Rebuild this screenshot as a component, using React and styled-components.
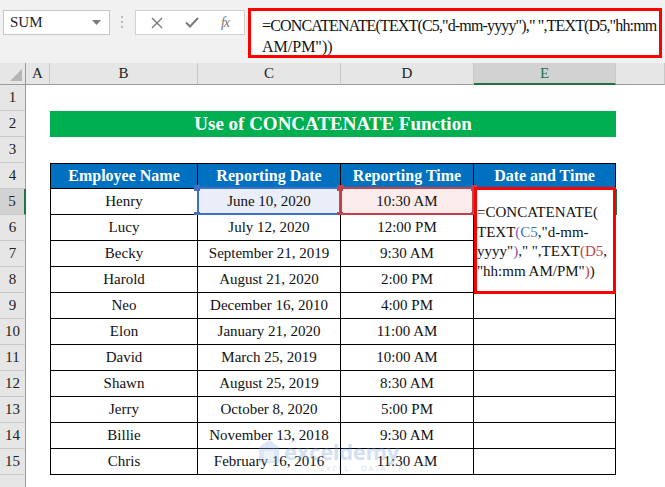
import React from 'react'
import styled, { createGlobalStyle, css } from 'styled-components'

const GlobalStyle = createGlobalStyle`
  html, body {
    margin: 0;
    padding: 0;
    background: #fff;
  }
  body {
    width: 665px;
    height: 487px;
    overflow: hidden;
    font-family: "Liberation Serif", "Times New Roman", serif;
    color: #111;
  }
`;

const Toolbar = styled.div`
  display: flex;
  align-items: flex-start;
  height: 63px;
  box-sizing: border-box;
  padding: 8px 3px 0 3px;
  background: #f1f1f1;
`;

const NameBox = styled.div`
  display: flex;
  align-items: center;
  justify-content: space-between;
  width: 107px;
  height: 25px;
  margin-top: 2px;
  box-sizing: border-box;
  padding: 0 8px 0 6px;
  background: #fff;
  border: 1px solid #c6c6c6;
  font-size: 15px;
  color: #222;
`;

const Grip = styled.div`
  display: flex;
  justify-content: center;
  align-items: center;
  width: 25px;
  height: 25px;
  margin-top: 2px;
`;

const FxBox = styled.div`
  display: flex;
  align-items: center;
  justify-content: space-around;
  width: 110px;
  height: 25px;
  margin-top: 2px;
  box-sizing: border-box;
  padding: 0 4px;
  background: #fff;
  border: 1px solid #d0d0d0;
`;

const FxLabel = styled.span`
  font-style: italic;
  font-size: 14px;
  color: #777;
  letter-spacing: -1px;
`;

const FormulaBox = styled.div`
  display: flex;
  flex-direction: column;
  width: 414px;
  height: 50px;
  margin-left: 3px;
  box-sizing: border-box;
  padding: 4px 0 0 11px;
  overflow: hidden;
  background: #fff;
  border: 3px solid #ff0000;
  font-size: 16px;
  line-height: 21px;
  white-space: nowrap;
`;

const FormulaLine = styled.span`
  letter-spacing: ${p => p.$tight ? '-0.85px' : '0'};
`;

const Sheet = styled.div`
  position: relative;
  display: grid;
  grid-template-columns: 26px 24px 148px 143px 133px 142px 49px;
  grid-template-rows: 22px repeat(16, 26px);
`;

const headBase = css`
  display: flex;
  align-items: center;
  justify-content: center;
  box-sizing: border-box;
  background: #e6e6e6;
  font-size: 15px;
  color: #222;
`;

const Corner = styled.div`
  ${headBase};
  position: relative;
  border-right: 1px solid #9b9b9b;
  border-bottom: 1px solid #9b9b9b;
`;

const CornerTri = styled.div`
  position: absolute;
  right: 3px;
  bottom: 3px;
  width: 0;
  height: 0;
  border-left: 12px solid transparent;
  border-bottom: 12px solid #b5b5b5;
`;

const ColHead = styled.div`
  ${headBase};
  border-right: 1px solid #c8c8c8;
  border-bottom: 1px solid #9b9b9b;
  ${p => p.$active && css`
    background: #d2d2d2;
    color: #217346;
    border-bottom: 2px solid #217346;
  `}
`;

const RowHead = styled.div`
  ${headBase};
  border-bottom: 1px solid #c8c8c8;
  border-right: 1px solid #9b9b9b;
  ${p => p.$active && css`
    background: #d2d2d2;
    border-right: 2px solid #217346;
  `}
`;

const Cell = styled.div`
  position: relative;
  display: flex;
  align-items: center;
  justify-content: center;
  box-sizing: border-box;
  background: #fff;
  font-size: 15px;
  white-space: nowrap;
  ${p => p.$table && css`
    border-right: 1px solid #000;
    border-bottom: 1px solid #000;
  `}
  ${p => p.$first && css`border-left: 1px solid #000;`}
  ${p => p.$top && css`border-top: 1px solid #000;`}
  ${p => p.$head && css`
    background: #0070c0;
    color: #fff;
    font-weight: bold;
    font-size: 16px;
  `}
  ${p => p.$fill && css`background: ${p.$fill};`}
`;

const Title = styled.div`
  grid-column: span 4;
  display: flex;
  align-items: center;
  justify-content: center;
  background: #00b050;
  color: #fff;
  font-weight: bold;
  font-size: 19px;
`;

const SelFrame = styled.div`
  position: absolute;
  top: -2px;
  left: -1px;
  right: -1px;
  bottom: -1px;
  border: 2px solid ${p => p.$color};
  pointer-events: none;
`;

const Handle = styled.span`
  position: absolute;
  width: 6px;
  height: 6px;
  background: ${p => p.$color};
  ${p => (p.$top ? 'top: -4px;' : 'bottom: -4px;')}
  ${p => (p.$left ? 'left: -4px;' : 'right: -4px;')}
`;

const EditBox = styled.div`
  position: absolute;
  left: 474px;
  top: 124px;
  width: 142px;
  height: 107px;
  box-sizing: border-box;
  display: flex;
  flex-direction: column;
  justify-content: flex-end;
  padding: 0 0 10px 0;
  background: #fff;
  border: 3px solid #ff0000;
  font-size: 15px;
  line-height: 19.5px;
  white-space: nowrap;
`;

const ActiveEdge = styled.div`
  position: absolute;
  left: 615px;
  top: 126px;
  width: 2px;
  height: 26px;
  background: #217346;
`;

const Ref = styled.span`
  color: ${p => p.$color};
`;

const Watermark = styled.div`
  position: absolute;
  left: 258px;
  top: 376px;
  display: flex;
  align-items: flex-start;
  gap: 4px;
  opacity: 0.3;
  pointer-events: none;
`;

const MarkText = styled.div`
  display: flex;
  flex-direction: column;
  font-family: "Open Sans", "Liberation Sans", sans-serif;
  color: #6f9bd6;
`;

const MarkName = styled.span`
  font-size: 22px;
  font-weight: 700;
  line-height: 24px;
  letter-spacing: -0.3px;
`;

const MarkSub = styled.span`
  font-size: 8px;
  letter-spacing: 1.5px;
  line-height: 10px;
  padding-left: 36px;
`;

const rows = [
  ['Henry', 'June 10, 2020', '10:30 AM'],
  ['Lucy', 'July 12, 2020', '12:00 PM'],
  ['Becky', 'September 21, 2019', '9:30 AM'],
  ['Harold', 'August 21, 2020', '2:00 PM'],
  ['Neo', 'December 16, 2010', '4:00 PM'],
  ['Elon', 'January 21, 2020', '11:00 AM'],
  ['David', 'March 25, 2019', '10:00 AM'],
  ['Shawn', 'August 25, 2019', '8:30 AM'],
  ['Jerry', 'October 8, 2020', '5:00 PM'],
  ['Billie', 'November 13, 2018', '9:30 AM'],
  ['Chris', 'February 16, 2016', '11:30 AM'],
];

const cols = ['A', 'B', 'C', 'D', 'E', '']

const Handles = ({ color }) => (
  <>
    <SelFrame $color={color} />
    <Handle $color={color} $top $left />
    <Handle $color={color} $top />
    <Handle $color={color} $left />
    <Handle $color={color} />
  </>
)

const BlankRow = ({ n }) => (
  <>
    <RowHead>{n}</RowHead>
    {cols.map((c, i) => <Cell key={i} />)}
  </>
)

const App = () => {
  return (
    <>
      <GlobalStyle />
      <Toolbar>
        <NameBox>
          SUM
          <svg width="9" height="5" viewBox="0 0 9 5"><path d="M0 0h9L4.5 5z" fill="#7a7a7a" /></svg>
        </NameBox>
        <Grip>
          <svg width="3" height="14" viewBox="0 0 3 14">
            <rect x="0" y="0" width="2" height="2" fill="#b9b9b9" />
            <rect x="0" y="5" width="2" height="2" fill="#b9b9b9" />
            <rect x="0" y="10" width="2" height="2" fill="#b9b9b9" />
          </svg>
        </Grip>
        <FxBox>
          <svg width="12" height="12" viewBox="0 0 12 12">
            <path d="M1 1l10 10M11 1L1 11" stroke="#7a7a7a" strokeWidth="1.4" />
          </svg>
          <svg width="14" height="11" viewBox="0 0 14 11">
            <path d="M1 5.5l4 4L13 1" stroke="#7a7a7a" strokeWidth="2" fill="none" />
          </svg>
          <FxLabel>fx</FxLabel>
        </FxBox>
        <FormulaBox>
          <FormulaLine $tight>=CONCATENATE(TEXT(C5,"d-mm-yyyy")," ",TEXT(D5,"hh:mm</FormulaLine>
          <FormulaLine>AM/PM"))</FormulaLine>
        </FormulaBox>
      </Toolbar>

      <Sheet>
        <Corner><CornerTri /></Corner>
        {cols.map((c, i) => <ColHead key={i} $active={c === 'E'}>{c}</ColHead>)}

        <BlankRow n={1} />

        <RowHead>2</RowHead>
        <Cell />
        <Title>Use of CONCATENATE Function</Title>
        <Cell />

        <BlankRow n={3} />

        <RowHead>4</RowHead>
        <Cell />
        <Cell $table $head $first $top>Employee Name</Cell>
        <Cell $table $head $top>Reporting Date</Cell>
        <Cell $table $head $top>Reporting Time</Cell>
        <Cell $table $head $top>Date and Time</Cell>
        <Cell />

        {rows.map((r, i) => (
          <React.Fragment key={r[0]}>
            <RowHead $active={i === 0}>{i + 5}</RowHead>
            <Cell />
            <Cell $table $first>{r[0]}</Cell>
            <Cell $table $fill={i === 0 ? '#e9eef8' : null}>
              {r[1]}
              {i === 0 && <Handles color="#3f6fc6" />}
            </Cell>
            <Cell $table $fill={i === 0 ? '#fbeceb' : null}>
              {r[2]}
              {i === 0 && <Handles color="#c4404b" />}
            </Cell>
            <Cell $table />
            <Cell />
          </React.Fragment>
        ))}

        <BlankRow n="" />

        <ActiveEdge />
        <EditBox>
          <span>=CONCATENATE(</span>
          <span>TEXT<Ref $color="#8a5aa6">(</Ref><Ref $color="#3f6fc6">C5</Ref>,"d-mm-</span>
          <span>yyyy"<Ref $color="#8a5aa6">)</Ref>," ",TEXT<Ref $color="#c4404b">(D5</Ref>,</span>
          <span>"hh:mm AM/PM"<Ref $color="#c4404b">)</Ref>)</span>
        </EditBox>

        <Watermark>
          <svg width="22" height="26" viewBox="0 0 22 26">
            <path d="M11 1L1 8v16h20V8z" fill="#8fb0dc" />
            <path d="M6 12h10v10H6z" fill="#c9d9ef" />
          </svg>
          <MarkText>
            <MarkName>exceldemy</MarkName>
            <MarkSub>EXCEL · DATA · BI</MarkSub>
          </MarkText>
        </Watermark>
      </Sheet>
    </>
  )
}

export default App
